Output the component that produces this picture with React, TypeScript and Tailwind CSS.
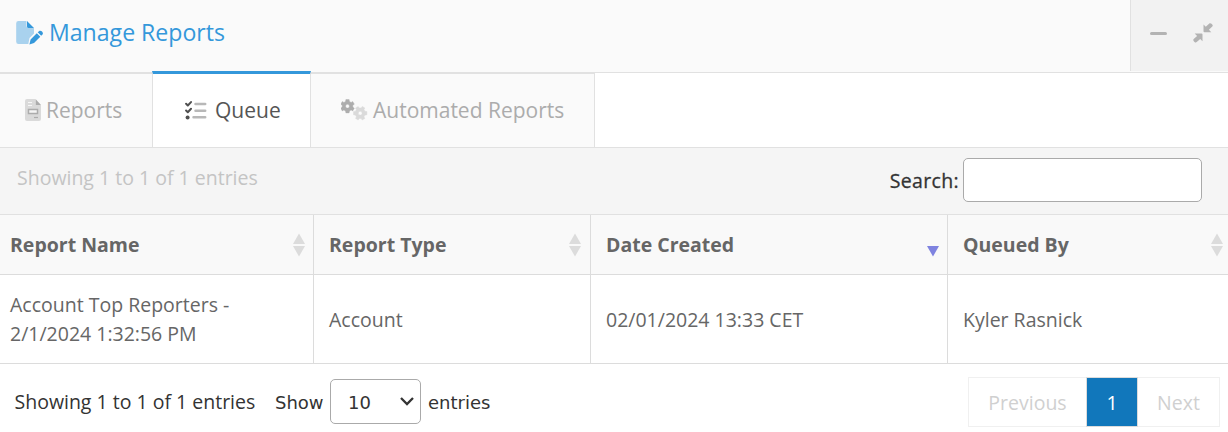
import { useState } from 'react'

type Report = {
  id: number
  name: string
  type: string
  created: string
  queuedBy: string
}

const reports: Report[] = [
  {
    id: 1,
    name: 'Account Top Reporters - 2/1/2024 1:32:56 PM',
    type: 'Account',
    created: '02/01/2024 13:33 CET',
    queuedBy: 'Kyler Rasnick',
  },
]

const FileEditIcon = () => (
  <svg viewBox="0 0 27 24" className="h-[24px] w-[27px] shrink-0">
    <path
      d="M2.5 0H10.5V5A2 2 0 0 0 12.500 7H18V12.500L13.500 17L12.300 23H2.500A2.300 2.300 0 0 1 .2 20.700V2.300A2.300 2.300 0 0 1 2.500 0Z"
      fill="#a9d2ee"
    />
    <path d="M11 0L18 7H12.500A1.500 1.500 0 0 1 11 5.500Z" fill="#3498db" />
    <path
      d="M20.800 12.200L24.300 15.700L18 22L13.400 23.400L14.600 18.500ZM21.700 11.300L23 10.300C24.900 8.700 28.100 11.900 26.500 13.600L25.200 14.800Z"
      fill="#3498db"
    />
  </svg>
)

const FileReportIcon = () => (
  <svg viewBox="0 0 16 22" className="h-[22px] w-[16px] shrink-0">
    <path
      d="M2 0H10V6H16V20A2 2 0 0 1 14 22H2A2 2 0 0 1 0 20V2A2 2 0 0 1 2 0Z"
      fill="#dadada"
    />
    <path d="M10.500 0L16 6H10.500Z" fill="#acacac" />
    <path d="M3 3.500H7M3 6.500H7" stroke="#f7f7f7" strokeWidth="1.200" />
    <rect x="3.500" y="10.500" width="9" height="4" fill="#f5f5f5" stroke="#acacac" strokeWidth="1.500" />
    <path d="M9 18.500H13" stroke="#acacac" strokeWidth="1.200" />
  </svg>
)

const TasksIcon = () => (
  <svg viewBox="0 0 22 20" className="h-[20px] w-[22px] shrink-0" fill="none" strokeLinecap="round">
    <path d="M10.500 3H20.200M10.500 9.700H20.200M8.500 16.300H20.200" stroke="#b8b8b8" strokeWidth="2.500" />
    <path
      d="M1.100 2.800L2.800 4.500L6 1.100M1.100 9.500L2.800 11.200L6 7.800"
      stroke="#4f4f4f"
      strokeWidth="2"
      strokeLinejoin="round"
    />
    <circle cx="2.600" cy="16.400" r="2" fill="#4f4f4f" />
  </svg>
)

const gear =
  'M-1.600 -6.700H1.600L2 -4.700L3.600 -3.800L5.200 -4.700L6.800 -2L5.300 -.9V.9L6.800 2L5.200 4.700L3.600 3.800L2 4.700L1.600 6.700H-1.600L-2 4.700L-3.600 3.800L-5.200 4.700L-6.800 2L-5.300 .9V-.9L-6.800 -2L-5.200 -4.700L-3.600 -3.800L-2 -4.700ZM0 -1.900A1.900 1.900 0 1 0 0 1.900A1.900 1.900 0 1 0 0 -1.900Z'

const GearsIcon = () => (
  <svg viewBox="0 0 27 22" className="h-[22px] w-[27px] shrink-0" fillRule="evenodd">
    <path d={gear} transform="translate(6.500 7.200)" fill="#adadad" stroke="#adadad" strokeWidth=".4" />
    <path d={gear} transform="translate(19.200 14.200) rotate(90)" fill="#dadada" stroke="#dadada" strokeWidth=".4" />
  </svg>
)

const CompressIcon = () => (
  <svg viewBox="0 0 20 20" className="h-[20px] w-[20px]" fill="#b3b3b3">
    <path d="M10.500 1.500L12.800 3.800L16.300 .6C17 0 17.800 .1 18.500 .8L19.200 1.500C19.900 2.200 19.900 3 19.300 3.600L15.900 6.800L18.300 9.200H11.500Q10.500 9.200 10.500 8.200Z" />
    <path d="M9.500 18.200L7.200 15.900L3.700 19.100C3 19.700 2.200 19.600 1.500 18.900L.8 18.200C.1 17.500 .1 16.700 .7 16.100L4.100 12.900L1.700 10.500H8.500Q9.500 10.500 9.500 11.500Z" />
  </svg>
)

const SortIcon = () => (
  <svg viewBox="0 0 12 24" className="h-[24px] w-[12px] shrink-0" fill="#dcdcdc">
    <path d="M6 .5L12 11H0Z" />
    <path d="M0 13H12L6 23.500Z" />
  </svg>
)

const SortDownIcon = () => (
  <svg viewBox="0 0 12 24" className="h-[24px] w-[12px] shrink-0" fill="#7f83e0">
    <path d="M0 13H12L6 23.500Z" />
  </svg>
)

const App = () => {
  const [query, setQuery] = useState('')
  const [pageSize, setPageSize] = useState('10')

  const filtered = reports.filter((report) =>
    report.name.toLowerCase().includes(query.toLowerCase())
  )

  return (
    <div className="h-[432px] w-[1228px] overflow-hidden bg-white font-['Open_Sans',sans-serif] text-[19.5px] text-[#666]">
      <header className="flex h-[73px] justify-between border-b border-[#e1e1e1] bg-[#fafafa]">
        <div className="flex items-start pt-[21px] pl-4">
          <FileEditIcon />
          <h1 className="-mt-[5px] ml-[6px] text-[23.1px] leading-[32px] text-[#3498db]">
            Manage Reports
          </h1>
        </div>
        <div className="flex h-[71px] w-[98px] border-l border-[#e1e1e1] bg-[#f2f2f2]">
          <button aria-label="Minimize" className="ml-[19px] mt-8 h-[3px] w-[17px] rounded-full bg-[#b3b3b3]" />
          <button aria-label="Restore" className="mt-[23px] ml-[26px] h-5">
            <CompressIcon />
          </button>
        </div>
      </header>

      <nav className="flex h-[75px] border-b border-[#e1e1e1] text-[21px] leading-[30px] text-[#acacac]">
        <button className="flex w-[152px] items-start border-t border-[#e1e1e1] bg-[#fafafa] pt-[21px] pl-[25px]">
          <span className="mt-[4px]"><FileReportIcon /></span>
          <span className="ml-[5px]">Reports</span>
        </button>
        <button className="-mt-[2px] flex h-[76px] w-[159px] items-start border-x border-t-[3px] border-x-[#e1e1e1] border-t-[#3498db] bg-white pt-[21px] pl-[32px] text-[#555]">
          <span className="mt-[6px]"><TasksIcon /></span>
          <span className="ml-[8px]">Queue</span>
        </button>
        <button className="flex w-[284px] items-start border-t border-r border-[#e1e1e1] bg-[#fafafa] pt-[21px] pl-[30px]">
          <span className="mt-[4px]"><GearsIcon /></span>
          <span className="ml-[5px]">Automated Reports</span>
        </button>
      </nav>

      <div className="flex h-[67px] items-start justify-between border-b border-[#e1e1e1] bg-[#f5f5f5] pr-[26px] pl-[17px]">
        <p className="mt-[16px] leading-[28px] text-[#c4c4c4]">Showing 1 to 1 of 1 entries</p>
        <label className="mt-[10px] flex items-center text-[#333]">
          <span className="pt-[2px] tracking-[0.35px] [-webkit-text-stroke:0.3px_#333]">Search:</span>
          <input
            type="text"
            value={query}
            onChange={(e) => setQuery(e.target.value)}
            className="ml-1 h-[44px] w-[239px] rounded-[5px] border border-[#aaa] bg-white px-2 outline-none"
          />
        </label>
      </div>

      <table className="w-full table-fixed border-separate border-spacing-0">
        <colgroup>
          <col className="w-[314px]" />
          <col className="w-[277px]" />
          <col className="w-[357px]" />
          <col className="w-[280px]" />
        </colgroup>
        <thead>
          <tr className="h-[60px] bg-[#f9f9f9] text-left font-bold">
            <th className="border-r border-b border-[#dcdcdc] p-0 pr-2 pl-[10px]">
              <div className="flex items-center justify-between">Report Name <SortIcon /></div>
            </th>
            <th className="border-r border-b border-[#dcdcdc] p-0 pr-[9px] pl-[15px]">
              <div className="flex items-center justify-between">Report Type <SortIcon /></div>
            </th>
            <th className="border-r border-b border-[#dcdcdc] p-0 pr-2 pl-[15px]">
              <div className="flex items-center justify-between">Date Created <SortDownIcon /></div>
            </th>
            <th className="border-b border-[#dcdcdc] p-0 pr-[5px] pl-[15px]">
              <div className="flex items-center justify-between">Queued By <SortIcon /></div>
            </th>
          </tr>
        </thead>
        <tbody>
          {filtered.map((report) => (
            <tr key={report.id} className="h-[89px] leading-[29px]">
              <td className="border-r border-b border-[#dcdcdc] py-0 pr-[50px] pl-[10px]">{report.name}</td>
              <td className="border-r border-b border-[#dcdcdc] py-0 pl-[15px]">{report.type}</td>
              <td className="border-r border-b border-[#dcdcdc] py-0 pl-[15px]">{report.created}</td>
              <td className="border-b border-[#dcdcdc] py-0 pl-[15px]">{report.queuedBy}</td>
            </tr>
          ))}
        </tbody>
      </table>

      <footer className="flex items-start justify-between pr-2 pl-[14.5px] text-[#333]">
        <div className="flex items-start">
          <p className="mt-[24px] w-[260.5px] leading-[28px] whitespace-nowrap">Showing 1 to 1 of 1 entries</p>
          <label className="mt-[15px] flex items-center font-['DejaVu_Sans',sans-serif] text-[18px]">
            <span className="w-[55px] pt-[2px]">Show</span>
            <span className="relative">
              <select
                value={pageSize}
                onChange={(e) => setPageSize(e.target.value)}
                className="h-[45px] w-[91px] appearance-none rounded-[5px] border border-[#aaa] bg-white pt-[2px] pl-[17px]"
              >
                <option>10</option>
                <option>25</option>
                <option>50</option>
              </select>
              <svg viewBox="0 0 14 9" className="absolute top-[18px] right-[7px] h-[9px] w-[14px]" fill="none">
                <path d="M1 1L7 7L13 1" stroke="#333" strokeWidth="2.300" />
              </svg>
            </span>
            <span className="ml-[7px] pt-[2px]">entries</span>
          </label>
        </div>
        <div className="mt-[13px] flex h-[50px] text-[#d0d0d0]">
          <button className="w-[118px] border border-r-0 border-[#f0f0f0] pt-[2px]">Previous</button>
          <button className="w-[52px] border border-[#dcdcdc] bg-[#1177bb] pt-[2px] text-white">1</button>
          <button className="w-[82px] border border-l-0 border-[#f0f0f0] pt-[2px]">Next</button>
        </div>
      </footer>
    </div>
  )
}

export default App
